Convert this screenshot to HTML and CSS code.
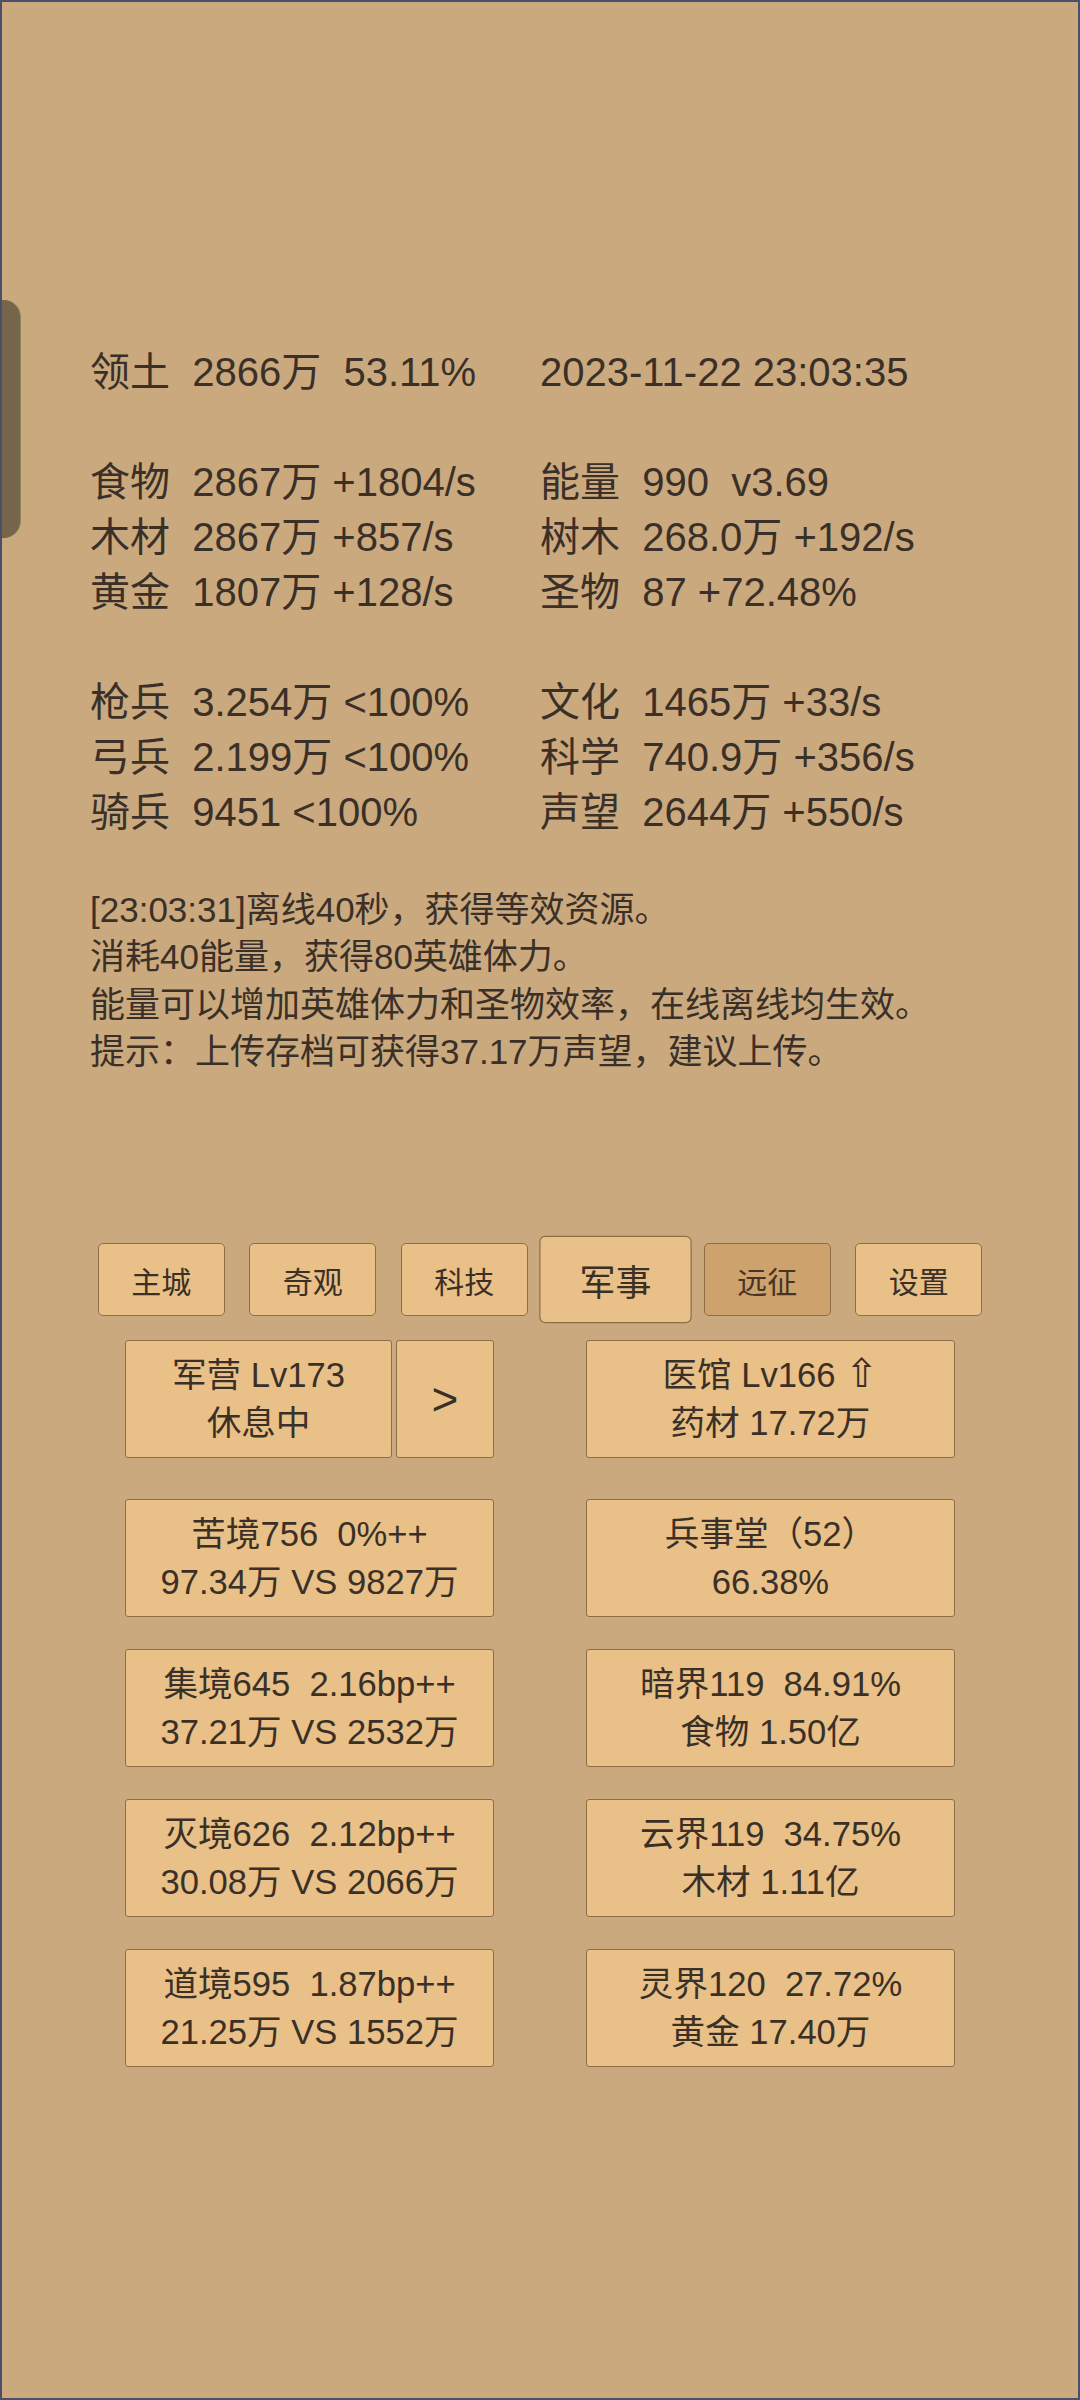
FILE: index.html
```html
<!DOCTYPE html>
<html lang="zh-CN">
<head>
<meta charset="utf-8">
<title>Game</title>
<link rel="stylesheet" href="styles.css">
</head>
<body>
<div class="frame">
  <div class="drawer-handle"></div>

  <div class="stats">
    <div class="cell">领土  2866万  53.11%</div>
    <div class="cell">2023-11-22 23:03:35</div>
    <div class="blank"></div>
    <div class="cell">食物  2867万 +1804/s</div>
    <div class="cell">能量  990  v3.69</div>
    <div class="cell">木材  2867万 +857/s</div>
    <div class="cell">树木  268.0万 +192/s</div>
    <div class="cell">黄金  1807万 +128/s</div>
    <div class="cell">圣物  87 +72.48%</div>
    <div class="blank"></div>
    <div class="cell">枪兵  3.254万 &lt;100%</div>
    <div class="cell">文化  1465万 +33/s</div>
    <div class="cell">弓兵  2.199万 &lt;100%</div>
    <div class="cell">科学  740.9万 +356/s</div>
    <div class="cell">骑兵  9451 &lt;100%</div>
    <div class="cell">声望  2644万 +550/s</div>
  </div>

  <div class="log">
    <div>[23:03:31]离线40秒，获得等效资源。</div>
    <div>消耗40能量，获得80英雄体力。</div>
    <div>能量可以增加英雄体力和圣物效率，在线离线均生效。</div>
    <div>提示：上传存档可获得37.17万声望，建议上传。</div>
  </div>

  <div class="tabs">
    <div class="tab">主城</div>
    <div class="tab">奇观</div>
    <div class="tab">科技</div>
    <div class="tab tab-current">军事</div>
    <div class="tab tab-pressed">远征</div>
    <div class="tab">设置</div>
  </div>

  <div class="first-row">
    <div class="pair">
      <div class="box box-main"><div>军营 Lv173<br>休息中</div></div>
      <div class="box box-arrow"><div>&gt;</div></div>
    </div>
    <div class="box"><div>医馆 Lv166 <span class="up">⇧</span><br>药材 17.72万</div></div>
  </div>

  <div class="grid">
    <div class="box"><div>苦境756  0%++<br>97.34万 VS 9827万</div></div>
    <div class="box"><div>兵事堂（52）<br>66.38%</div></div>
    <div class="box"><div>集境645  2.16bp++<br>37.21万 VS 2532万</div></div>
    <div class="box"><div>暗界119  84.91%<br>食物 1.50亿</div></div>
    <div class="box"><div>灭境626  2.12bp++<br>30.08万 VS 2066万</div></div>
    <div class="box"><div>云界119  34.75%<br>木材 1.11亿</div></div>
    <div class="box"><div>道境595  1.87bp++<br>21.25万 VS 1552万</div></div>
    <div class="box"><div>灵界120  27.72%<br>黄金 17.40万</div></div>
  </div>
</div>
</body>
</html>
```

FILE: styles.css
```css
* { box-sizing: border-box; }

html, body {
  margin: 0;
  padding: 0;
}

body {
  font-family: "Liberation Sans", "Noto Sans CJK SC", sans-serif;
  color: #3a3027;
}

.frame {
  position: relative;
  width: 1080px;
  height: 2400px;
  border: 2px solid #4b4f69;
  background: #caa97f;
  padding-top: 343px;
  overflow: hidden;
}

.drawer-handle {
  position: absolute;
  left: -2px;
  top: 298px;
  width: 20px;
  height: 238px;
  background: #76654a;
  border-radius: 0 17px 17px 0;
  box-shadow: 1px 0 0 #8a8a5a;
}

.stats {
  display: grid;
  grid-template-columns: 450px 450px;
  padding-left: 88px;
  font-size: 40px;
  line-height: 55px;
}

.cell {
  white-space: pre;
  height: 55px;
}

.blank {
  grid-column: 1 / 3;
  height: 55px;
}

.log {
  margin-top: 46px;
  padding-left: 88px;
  font-size: 35px;
  line-height: 47.3px;
}

.tabs {
  display: flex;
  justify-content: center;
  gap: 24.5px;
  margin-top: 168px;
}

.tab {
  width: 127px;
  height: 73px;
  display: flex;
  align-items: center;
  justify-content: center;
  background: #e9c088;
  border: 1.5px solid #8e6d47;
  border-radius: 5px;
  font-size: 30px;
  color: #3b3026;
}

.tab-current {
  transform: scale(1.2);
}

.tab-pressed {
  background: #cda26d;
  color: #463525;
}

.first-row {
  display: grid;
  grid-template-columns: 369px 369px;
  column-gap: 92px;
  justify-content: center;
  margin-top: 24px;
}

.pair {
  display: flex;
  gap: 4px;
}

.grid {
  display: grid;
  grid-template-columns: 369px 369px;
  column-gap: 92px;
  row-gap: 32px;
  justify-content: center;
  margin-top: 41px;
}

.box {
  height: 118px;
  display: flex;
  align-items: center;
  justify-content: center;
  text-align: center;
  white-space: pre;
  background: #e9c088;
  border: 1px solid #8e6d47;
  border-radius: 3px;
  font-size: 34.6px;
  line-height: 48px;
}

.box-main {
  flex: 0 0 267px;
}

.box-arrow {
  flex: 1;
  font-size: 46px;
}

.up {
  font-family: "DejaVu Sans", sans-serif;
  font-size: 40px;
  line-height: 40px;
}
```
